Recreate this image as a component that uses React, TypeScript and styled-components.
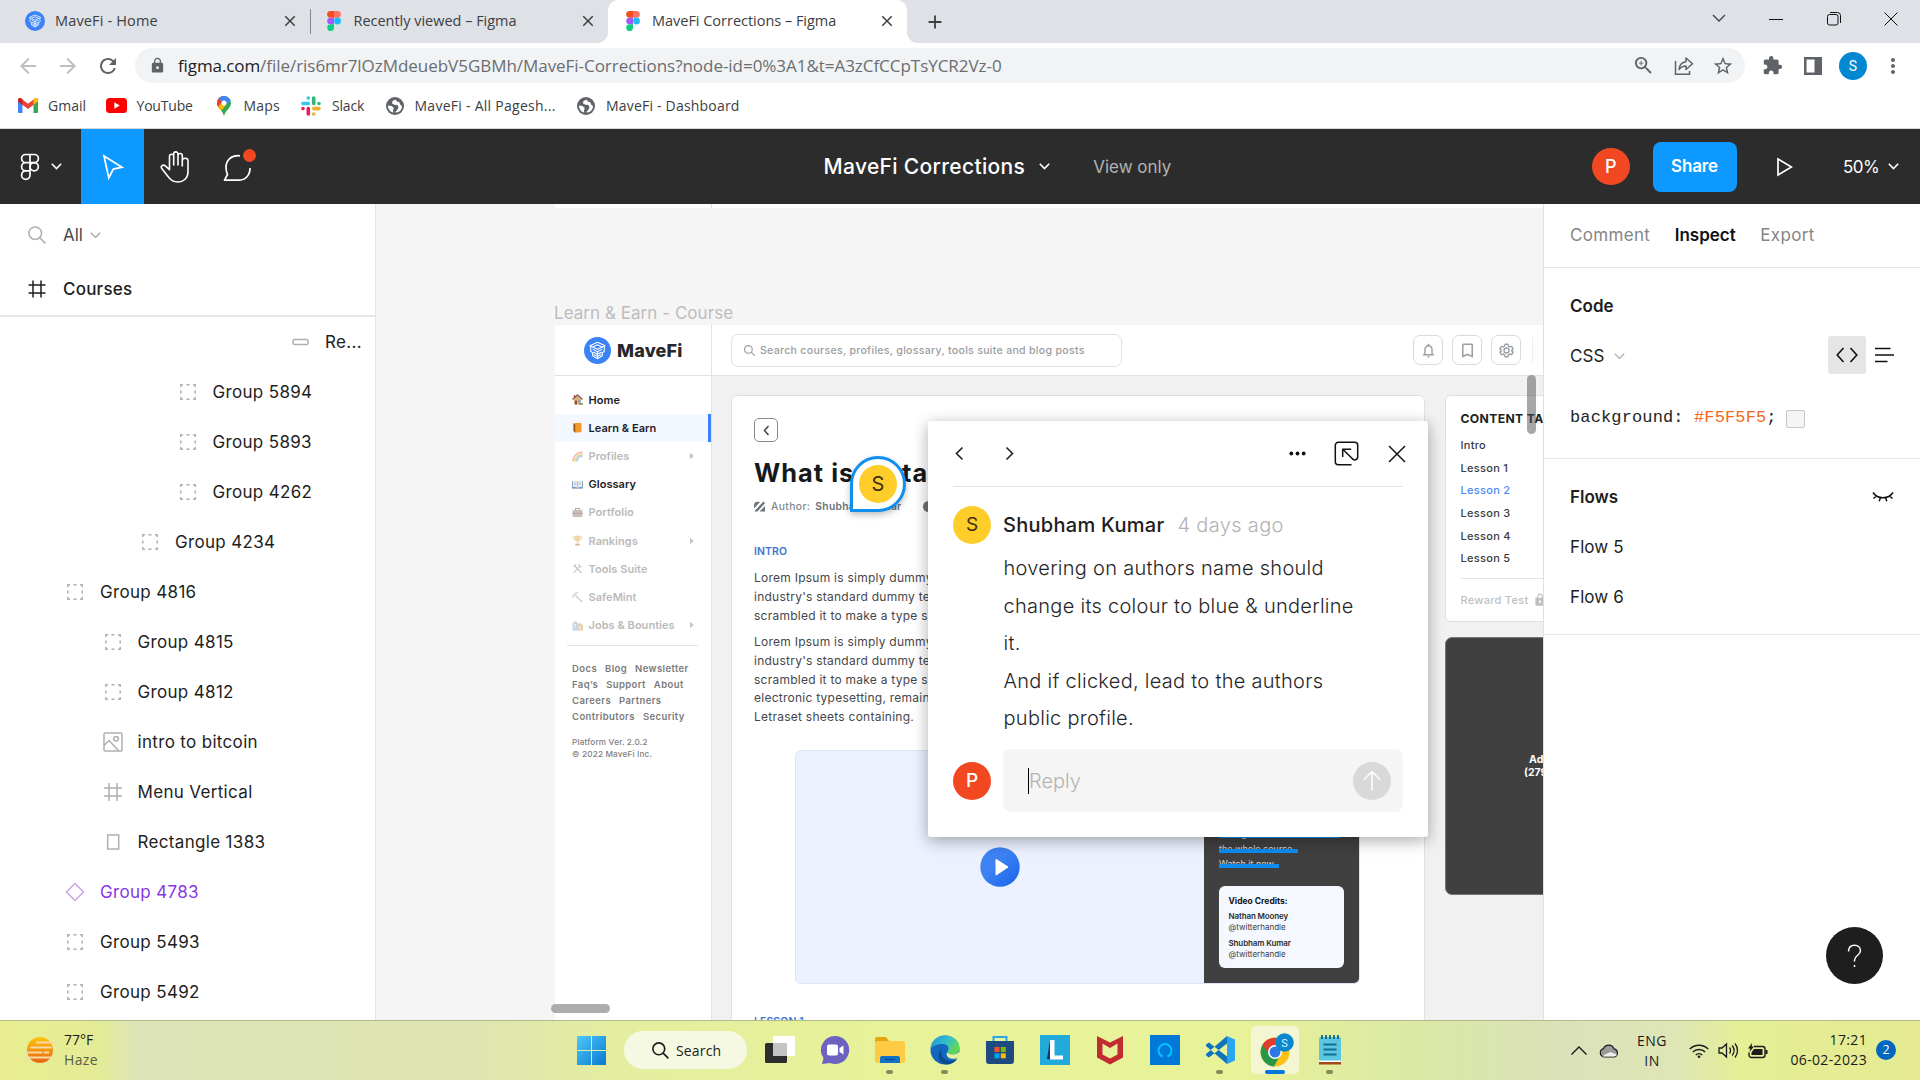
import React from "react";
import styled, { createGlobalStyle } from "styled-components";
import {
  MdArrowBack,
  MdArrowForward,
  MdRefresh,
  MdLock,
  MdStarBorder,
  MdExtension,
  MdMoreVert,
  MdZoomIn,
  MdClose,
  MdAdd,
  MdNotificationsNone,
  MdBookmarkBorder,
} from "react-icons/md";

const ui = `"Open Sans", "Noto Sans", sans-serif`;
const inter = `Inter, "Liberation Sans", sans-serif`;

const Global = createGlobalStyle`
  * { box-sizing: border-box; }
  html, body { margin: 0; padding: 0; overflow: hidden; background: #fff; }
  svg { display: block; flex: none; }
`;

const Screen = styled.div`
  width: 1920px;
  height: 1080px;
  display: flex;
  flex-direction: column;
  overflow: hidden;
  font-family: ${inter};
  color: #1e1e1e;
  white-space: nowrap;
`;

/* ---------- browser ---------- */

const TabStrip = styled.div`
  height: 43px;
  flex: none;
  display: flex;
  align-items: stretch;
  background: #dee1e6;
  font-family: ${ui};
  color: #3c4043;
`;

const Tab = styled.div<{ $w: number; $left: number; $active?: boolean }>`
  position: relative;
  width: ${(p) => p.$w}px;
  display: flex;
  align-items: center;
  padding: 0 11px 1px ${(p) => p.$left}px;
  background: ${(p) => (p.$active ? "#fff" : "transparent")};
  border-radius: 10px 10px 0 0;
  ${(p) =>
    p.$active &&
    `&::before, &::after {
      content: ""; position: absolute; bottom: 0; width: 10px; height: 10px;
    }
    &::before { left: -10px; background: radial-gradient(circle at 0 0, transparent 9.5px, #fff 10px); }
    &::after { right: -10px; background: radial-gradient(circle at 100% 0, transparent 9.5px, #fff 10px); }`}
`;

const TabTitle = styled.span<{ $gap: number; $ls?: number }>`
  flex: 1;
  margin-left: ${(p) => p.$gap}px;
  font-size: 14.5px;
  line-height: 20px;
  letter-spacing: ${(p) => p.$ls ?? -0.02}px;
`;

const TabDivider = styled.div`
  width: 1px;
  height: 25px;
  margin-top: 9px;
  background: #85888c;
`;

const NewTab = styled.div`
  display: flex;
  align-items: center;
  margin-left: 17px;
  flex: 1;
`;

const WindowButtons = styled.div`
  display: flex;
  align-items: center;
  gap: 43.3px;
  padding: 0 22px 6px 0;
`;

const AddressRow = styled.div`
  height: 45px;
  flex: none;
  display: flex;
  align-items: center;
  background: #fff;
  color: #5f6368;
`;

const NavButtons = styled.div`
  width: 135px;
  display: flex;
  align-items: center;
  gap: 16px;
  padding-left: 16px;
  svg:nth-child(-n + 2) {
    color: #bcbec1;
  }
`;

const AddressBar = styled.div`
  width: 1610px;
  height: 35px;
  display: flex;
  align-items: center;
  padding: 0 11px 0 14px;
  border-radius: 18px;
  background: #f1f3f4;
`;

const Url = styled.div`
  flex: 1;
  margin-left: 12px;
  font-family: ${ui};
  font-size: 17px;
  letter-spacing: -0.04px;
  color: #6a6e72;
  b {
    font-weight: 400;
    color: #202124;
    letter-spacing: -0.1px;
  }
`;

const AddressIcons = styled.div`
  display: flex;
  align-items: center;
  gap: 18.5px;
`;

const BrowserTools = styled.div`
  flex: 1;
  display: flex;
  align-items: center;
  padding-left: 17px;
`;

const PanelGlyph = styled.div`
  margin-left: 20.5px;
`;

const Profile = styled.div`
  width: 28px;
  height: 28px;
  margin: 0 13.5px 0 17.5px;
  border-radius: 50%;
  background: #0288d1;
  color: #fff;
  font: 400 14px/28px Roboto, sans-serif;
  text-align: center;
`;

const Bookmarks = styled.div`
  height: 41px;
  flex: none;
  display: flex;
  align-items: center;
  padding: 0 0 5px 18px;
  background: #fff;
  border-bottom: 1px solid #d5d6d8;
  font-family: ${ui};
  font-size: 14px;
  color: #3c4043;
`;

const Bookmark = styled.div<{ $w: number; $gap: number; $ls?: number }>`
  display: flex;
  align-items: center;
  width: ${(p) => p.$w}px;
  letter-spacing: ${(p) => p.$ls ?? 0}px;
  span {
    margin-left: ${(p) => p.$gap}px;
  }
`;

/* ---------- editor toolbar ---------- */

const Toolbar = styled.div`
  height: 75px;
  flex: none;
  display: flex;
  align-items: stretch;
  background: #2c2c2c;
  color: #fff;
`;

const Tool = styled.div<{ $w: number; $active?: boolean }>`
  width: ${(p) => p.$w}px;
  display: flex;
  align-items: center;
  justify-content: center;
  gap: 11px;
  background: ${(p) => (p.$active ? "#0d99ff" : "transparent")};
`;

const FileTitle = styled.div`
  flex: 1;
  display: flex;
  align-items: center;
  padding-left: 553.5px;
  font-size: 21px;
  font-weight: 450;
  letter-spacing: 0.33px;
  svg {
    margin-left: 14px;
  }
`;

const ViewOnly = styled.span`
  margin-left: 43px;
  font-size: 17px;
  font-weight: 400;
  letter-spacing: 0;
  color: #b3b3b3;
`;

const ToolbarRight = styled.div`
  width: 328px;
  display: flex;
  align-items: center;
  font-size: 17px;
`;

const Avatar = styled.div<{ $size: number; $color: string; $ink?: string; $font?: number }>`
  width: ${(p) => p.$size}px;
  height: ${(p) => p.$size}px;
  flex: none;
  display: flex;
  align-items: center;
  justify-content: center;
  border-radius: 50%;
  background: ${(p) => p.$color};
  color: ${(p) => p.$ink ?? "#fff"};
  font-size: ${(p) => p.$font ?? 18}px;
  font-weight: ${(p) => (p.$ink ? 400 : 500)};
`;

const ShareButton = styled.div`
  width: 84px;
  height: 50px;
  margin: 0 40px 0 23px;
  border-radius: 8px;
  background: #0d99ff;
  font-weight: 600;
  line-height: 49px;
  letter-spacing: -0.1px;
  text-align: center;
`;

const Zoom = styled.div`
  display: flex;
  align-items: center;
  gap: 9px;
  margin-left: 50.5px;
  letter-spacing: -0.55px;
`;

/* ---------- panels ---------- */

const Workspace = styled.div`
  height: 816px;
  flex: none;
  display: flex;
`;

const LeftPanel = styled.div`
  width: 376px;
  background: #fff;
  border-right: 1px solid #e6e6e6;
  font-size: 17px;
`;

const SearchRow = styled.div`
  height: 61px;
  display: flex;
  align-items: center;
  padding: 1px 0 0 28px;
  color: #b0b0b0;
  span {
    margin: 0 7px 0 17px;
    color: #4a4a4a;
  }
`;

const PageRow = styled.div`
  height: 52px;
  display: flex;
  align-items: center;
  gap: 17px;
  padding: 0 0 2px 28px;
  border-bottom: 2px solid #e6e6e6;
  font-weight: 500;
  letter-spacing: 0.22px;
`;

const Layer = styled.div<{ $indent: number; $purple?: boolean }>`
  height: 50px;
  display: flex;
  align-items: center;
  padding-left: ${(p) => p.$indent}px;
  letter-spacing: 0.33px;
  font-weight: 370;
  color: ${(p) => (p.$purple ? "#8638e5" : "#1e1e1e")};
  svg {
    margin-right: 14px;
    color: ${(p) => (p.$purple ? "#c3a8e6" : "#b0b0b0")};
  }
`;

const RightPanel = styled.div`
  width: 377px;
  position: relative;
  background: #fff;
  border-left: 1px solid #e0e0e0;
  font-size: 17px;
`;

const PanelTabs = styled.div`
  height: 64px;
  display: flex;
  align-items: center;
  gap: 24.5px;
  padding: 0 0 1px 26px;
  border-bottom: 1px solid #e6e6e6;
  color: #858585;
  letter-spacing: 0.33px;
  b {
    font-weight: 600;
    letter-spacing: 0;
    color: #111;
  }
`;

const Section = styled.div<{ $bottom: number }>`
  padding: 13px 26px ${(p) => p.$bottom}px 26px;
  border-bottom: 1px solid #e6e6e6;
`;

const SectionRow = styled.div<{ $bold?: boolean; $h?: number }>`
  height: ${(p) => p.$h ?? 50}px;
  display: flex;
  align-items: center;
  font-weight: ${(p) => (p.$bold ? 600 : 370)};
  letter-spacing: ${(p) => (p.$bold ? 0 : 0.1)}px;
`;

const Language = styled.span`
  margin-right: 9px;
`;

const Spacer = styled.div`
  flex: 1;
`;

const ViewToggle = styled.div`
  width: 38px;
  height: 38px;
  display: flex;
  align-items: center;
  justify-content: center;
  margin: 0 9px 2px 0;
  border-radius: 3px;
  background: #e5e5e5;
`;

const ListGlyph = styled.div`
  padding-bottom: 2px;
`;

const Code = styled.div`
  display: flex;
  align-items: center;
  font-family: "Liberation Mono", "DejaVu Sans Mono", monospace;
  font-size: 17px;
  font-weight: 400;
  letter-spacing: 0.13px;
  white-space: pre;
  em {
    font-style: normal;
    color: #f2681c;
  }
`;

const Swatch = styled.div`
  width: 19px;
  height: 18px;
  margin: 4px 0 0 9px;
  border: 1px solid #c8c8c8;
  border-radius: 2px;
  background: #f5f5f5;
`;

const HelpButton = styled.div`
  position: absolute;
  right: 37px;
  bottom: 36px;
  width: 57px;
  height: 57px;
  display: flex;
  align-items: center;
  justify-content: center;
  border-radius: 50%;
  background: #1e1e1e;
`;

/* ---------- canvas ---------- */

const Canvas = styled.div`
  position: relative;
  width: 1167px;
  overflow: hidden;
  background: #f5f5f5;
`;

const UpperFrame = styled.div`
  position: absolute;
  left: 179px;
  top: 0;
  width: 1000px;
  height: 4px;
  padding-left: 156px;
  background: #fff;
  div {
    width: 1px;
    height: 4px;
    background: #ddd;
  }
`;

const FrameLabel = styled.div`
  position: absolute;
  left: 178px;
  top: 99px;
  font-size: 17px;
  line-height: 21px;
  letter-spacing: 0.04px;
  color: #bdbdbd;
`;

const Frame = styled.div`
  position: absolute;
  left: 179px;
  top: 121px;
  width: 1100px;
  height: 800px;
  display: flex;
  background: #f1f1f1;
  color: #222;
`;

const SideBar = styled.div`
  width: 157px;
  flex: none;
  background: #fff;
  border-right: 1px solid #e2e2e2;
`;

const Brand = styled.div`
  height: 51px;
  display: flex;
  align-items: center;
  gap: 6px;
  padding-left: 29px;
  border-bottom: 1px solid #e2e2e2;
  font-size: 18px;
  font-weight: 800;
  letter-spacing: 0.2px;
  color: #26282b;
`;

const Menu = styled.div`
  padding: 9.6px 0 6px;
`;

const MenuItem = styled.div<{ $state?: "on" | "off" | "current" }>`
  height: 28.2px;
  display: flex;
  align-items: center;
  padding: 0 15px 0 17px;
  font-size: 11px;
  font-weight: 600;
  letter-spacing: 0.04px;
  color: ${(p) => (p.$state === "off" ? "#bababa" : "#1c1d1f")};
  background: ${(p) => (p.$state === "current" ? "#f3f7ff" : "transparent")};
  box-shadow: ${(p) => (p.$state === "current" ? "inset -3px 0 0 #3c82f6" : "none")};
  svg:first-child {
    margin-right: 5.5px;
    opacity: ${(p) => (p.$state === "off" ? 0.45 : 1)};
  }
  span {
    flex: 1;
  }
`;

const MenuRule = styled.div`
  width: 131px;
  height: 1px;
  margin: 0 0 13.9px 12px;
  background: #e2e2e2;
`;

const FooterLinks = styled.div`
  height: 16.2px;
  display: flex;
  align-items: center;
  gap: 8px;
  padding-left: 17px;
  font-size: 9.5px;
  font-weight: 600;
  letter-spacing: 0.4px;
  color: #7b7b7b;
`;

const Version = styled.div`
  margin-top: 11px;
  padding-left: 17px;
  font-size: 8.2px;
  font-weight: 500;
  line-height: 12.5px;
  letter-spacing: 0.17px;
  color: #808080;
`;

const FrameMain = styled.div`
  flex: 1;
  display: flex;
  flex-direction: column;
`;

const FrameHeader = styled.div`
  height: 51px;
  flex: none;
  display: flex;
  align-items: center;
  padding-left: 19px;
  background: #fff;
  border-bottom: 1px solid #e2e2e2;
`;

const FrameSearch = styled.div`
  width: 391px;
  height: 33px;
  margin-right: 291px;
  display: flex;
  align-items: center;
  gap: 5.500px;
  padding: 1px 0 0 11.500px;
  border: 1px solid #dfe1e3;
  border-radius: 7px;
  font-size: 10.6px;
  font-weight: 500;
  letter-spacing: 0.28px;
  color: #9a9da1;
`;

const IconBox = styled.div`
  width: 30px;
  height: 30px;
  display: flex;
  align-items: center;
  justify-content: center;
  margin-right: 9px;
  border: 1px solid #d8dadd;
  border-radius: 7px;
  color: #9ba0a6;
`;

const HeaderRule = styled.div`
  width: 1px;
  height: 27px;
  margin-left: 2px;
  background: #eee;
`;

const Columns = styled.div`
  flex: 1;
  display: flex;
  align-items: flex-start;
  gap: 20px;
  padding: 19px 0 0 18.5px;
`;

const Article = styled.div`
  width: 694.5px;
  height: 720px;
  flex: none;
  padding: 22px 22.5px;
  border: 1px solid #e0e0e0;
  border-radius: 6px;
  background: #fff;
`;

const BackButton = styled.div`
  width: 24px;
  height: 24px;
  display: flex;
  align-items: center;
  justify-content: center;
  border: 1px solid #8b8b8b;
  border-radius: 5px;
`;

const Heading = styled.div`
  margin-top: 16px;
  font-size: 25.3px;
  font-weight: 700;
  line-height: 30px;
  letter-spacing: 1.05px;
  color: #17181a;
`;

const Meta = styled.div`
  height: 14px;
  margin: 11px 0 31.5px;
  display: flex;
  align-items: center;
  font-size: 10.3px;
  font-weight: 500;
  letter-spacing: 0.4px;
  color: #84888d;
  b {
    width: 107.500px;
    margin-left: 5px;
    font-weight: 600;
    letter-spacing: 0.3px;
    color: #6d7278;
  }
  svg:first-child {
    margin-right: 6px;
  }
`;

const Kicker = styled.div`
  font-size: 10.4px;
  font-weight: 600;
  line-height: 14px;
  letter-spacing: 0.15px;
  color: #3c74cf;
`;

const Paragraph = styled.div<{ $top: number }>`
  margin-top: ${(p) => p.$top}px;
  font-size: 12px;
  line-height: 18.7px;
  letter-spacing: 0.25px;
  color: #45474a;
`;

const Video = styled.div`
  width: 564.5px;
  height: 234px;
  margin: 22.8px 0 31px 41px;
  display: flex;
  overflow: hidden;
  border: 1px solid #dde4f3;
  border-radius: 6px;
  background: #ebf1fe;
`;

const Player = styled.div`
  flex: 1;
  display: flex;
  align-items: center;
  justify-content: center;
`;

const VideoAside = styled.div`
  width: 156px;
  margin: -1px -1px -1px 0;
  display: flex;
  flex-direction: column;
  align-items: flex-start;
  justify-content: flex-end;
  padding: 0 15.5px 15.5px;
  background: #404040;
`;

const Highlight = styled.span<{ $w: number }>`
  position: relative;
  width: ${(p) => p.$w}px;
  font-size: 9px;
  line-height: 15px;
  color: #d8d8d8;
  &::after {
    content: "";
    position: absolute;
    left: 0;
    right: 0;
    top: 8.8px;
    height: 3.7px;
    background: #0d8cf0;
  }
`;

const Credits = styled.div`
  width: 125px;
  height: 82px;
  margin-top: 15.5px;
  padding: 9px 9.5px;
  border-radius: 6px;
  background: #f5f8ff;
  font-size: 8px;
  line-height: 11px;
  color: #3a3c40;
  h4 {
    margin: 0 0 3px;
    font-size: 8.5px;
    line-height: 13px;
    color: #101113;
  }
  b {
    display: block;
    font-weight: 600;
    letter-spacing: -0.12px;
    color: #2b2d30;
  }
  p {
    margin: 0 0 4.5px;
  }
`;

const Aside = styled.div`
  width: 217px;
  flex: none;
`;

const ContentTable = styled.div`
  height: 226.5px;
  padding: 15.5px 14.5px;
  border: 1px solid #e0e0e0;
  border-radius: 6px;
  background: #fff;
  font-size: 11px;
  font-weight: 500;
  letter-spacing: 0.3px;
  h3 {
    margin: 0 0 8.7px;
    font-size: 12.2px;
    font-weight: 700;
    line-height: 14px;
    letter-spacing: 0.35px;
  }
`;

const LessonLink = styled.div<{ $current?: boolean }>`
  line-height: 22.6px;
  color: ${(p) => (p.$current ? "#4a8bf5" : "#3a3c3f")};
`;

const Reward = styled.div`
  display: flex;
  align-items: center;
  gap: 5px;
  margin-top: 8px;
  padding-top: 13px;
  border-top: 1px solid #e4e4e4;
  line-height: 16px;
  letter-spacing: 0.28px;
  color: #bfbfbf;
`;

const AdBox = styled.div`
  height: 258px;
  margin-top: 15px;
  display: flex;
  flex-direction: column;
  align-items: center;
  justify-content: center;
  border: 1px solid #777;
  border-radius: 7px;
  background: #404040;
  color: #fff;
  font-size: 10.5px;
  font-weight: 700;
  line-height: 13px;
`;

const HScroll = styled.div`
  position: absolute;
  left: 175px;
  bottom: 7px;
  width: 59px;
  height: 9px;
  border-radius: 5px;
  background: rgba(150, 150, 150, 0.78);
`;

const VScroll = styled.div`
  position: absolute;
  left: 1151px;
  top: 171px;
  width: 9px;
  height: 59px;
  border-radius: 5px;
  background: rgba(80, 80, 80, 0.5);
`;

const Pin = styled.div`
  position: absolute;
  left: 474px;
  top: 252px;
  width: 56px;
  height: 56px;
  display: flex;
  align-items: center;
  justify-content: center;
  border: 3px solid #1090ee;
  border-radius: 50% 50% 50% 0;
  background: #fff;
  box-shadow: 0 3px 6px rgba(0, 0, 0, 0.25);
`;

const Popover = styled.div`
  position: absolute;
  left: 552px;
  top: 217px;
  width: 500px;
  height: 416px;
  padding: 0 25px;
  border-radius: 3px;
  background: #fff;
  box-shadow: 0 5px 17px rgba(0, 0, 0, 0.2), 0 2px 14px rgba(0, 0, 0, 0.15);
  font-size: 20px;
`;

const PopHeader = styled.div`
  height: 66px;
  display: flex;
  align-items: center;
  padding-right: 0;
  margin-bottom: 18.5px;
  border-bottom: 1px solid #e3e3e3;
`;

const PopIcon = styled.div<{ $ml?: number; $mr?: number }>`
  margin-left: ${(p) => p.$ml ?? 0}px;
  margin-right: ${(p) => p.$mr ?? 0}px;
`;

const Author = styled.div`
  display: flex;
  align-items: center;
  height: 38px;
  b {
    margin-left: 12px;
    font-weight: 500;
    letter-spacing: 0.28px;
  }
  time {
    margin-left: 13px;
    font-weight: 300;
    letter-spacing: 0.35px;
    color: #b3b3b3;
  }
`;

const Message = styled.div`
  margin: 6.5px 0 11.5px 50.5px;
  font-weight: 350;
  line-height: 37.5px;
  letter-spacing: 0.28px;
  color: #262626;
`;

const ReplyRow = styled.div`
  display: flex;
  align-items: center;
  gap: 12px;
`;

const ReplyBox = styled.div`
  width: 400px;
  height: 63px;
  display: flex;
  align-items: center;
  justify-content: space-between;
  padding: 0 12px 0 25px;
  border-radius: 8px;
  background: #f5f5f5;
  color: #b3b3b3;
  font-weight: 350;
`;

const Caret = styled.span`
  padding: 1px 0;
  border-left: 1px solid #000;
`;

/* ---------- taskbar ---------- */

const Taskbar = styled.div`
  height: 60px;
  flex: none;
  display: flex;
  align-items: stretch;
  border-top: 1px solid #b4b98c;
  background: linear-gradient(
    90deg,
    #e9ee90 0,
    #e3ec96 100px,
    #dce4b8 135px,
    #dfe5b0 480px,
    #e4ee9f 620px,
    #e8f298 900px,
    #e8f298 1240px,
    #d9e8a6 1430px,
    #dce1bb 1570px,
    #dfe6b4 1680px,
    #e4ef96 1740px,
    #e5ea92 1920px
  );
  font-family: ${ui};
  font-size: 14px;
  color: #1b1b1b;
`;

const Weather = styled.div`
  width: 577px;
  display: flex;
  align-items: center;
  gap: 9px;
  padding: 0 0 2px 25px;
  line-height: 20px;
  p {
    margin: 0;
    color: #5b5e43;
    letter-spacing: 0.35px;
  }
`;

const SearchPill = styled.div`
  width: 123px;
  height: 38px;
  margin: 10px 18.5px 0 18px;
  display: flex;
  align-items: center;
  gap: 7px;
  padding-left: 28px;
  border-radius: 19px;
  background: #f6f9e1;
  letter-spacing: 0.15px;
`;

const Start = styled.div`
  padding-top: 15px;
`;

const TaskApps = styled.div`
  width: 808.5px;
  display: flex;
  gap: 7px;
  margin-left: -10px;
`;

const TaskApp = styled.div<{ $open?: boolean; $active?: boolean }>`
  width: 48px;
  height: 48px;
  margin-top: 5px;
  display: flex;
  flex-direction: column;
  align-items: center;
  justify-content: space-between;
  padding-top: ${(p) => (p.$active ? 7 : 9)}px;
  border-radius: 5px;
  background: ${(p) => (p.$active ? "#f2f6d2" : "transparent")};
  &::after {
    content: "";
    width: ${(p) => (p.$active ? 20 : 7)}px;
    height: 4px;
    border-radius: 2px;
    background: ${(p) => (p.$active ? "#0078d7" : p.$open ? "#868a58" : "transparent")};
  }
`;

const Tray = styled.div`
  flex: 1;
  display: flex;
  align-items: center;
`;

const TrayText = styled.div<{ $w: number; $align?: string; $ls?: number; $up?: number }>`
  width: ${(p) => p.$w}px;
  padding-bottom: ${(p) => p.$up ?? 0}px;
  text-align: ${(p) => p.$align ?? "center"};
  line-height: 20px;
  letter-spacing: ${(p) => p.$ls ?? 0.35}px;
`;

const TrayIcon = styled.div<{ $w: number }>`
  width: ${(p) => p.$w}px;
  display: flex;
  justify-content: center;
`;

const Badge = styled.div`
  width: 20px;
  height: 20px;
  margin: 0 0 1px 9px;
  border-radius: 50%;
  background: #0067c0;
  color: #fff;
  font-size: 12.5px;
  line-height: 19px;
  text-align: center;
`;

/* ---------- icons ---------- */

const Chevron = ({ w = 11, c = "currentColor", s = 1.6 }: { w?: number; c?: string; s?: number }) => (
  <svg width={w} height={w * 0.6} viewBox="0 0 11 6.6" fill="none" stroke={c} strokeWidth={s}>
    <path d="M.8.8 5.5 5.5 10.2.8" />
  </svg>
);

const FigmaMark = () => (
  <svg width="14" height="20" viewBox="0 0 14 20">
    <path d="M3.5 0H7v6.7H3.5a3.35 3.35 0 0 1 0-6.7z" fill="#f24e1e" />
    <path d="M7 0h3.5a3.35 3.35 0 0 1 0 6.7H7z" fill="#ff7262" />
    <path d="M3.5 6.7H7v6.6H3.5a3.3 3.3 0 0 1 0-6.6z" fill="#a259ff" />
    <circle cx="10.5" cy="10" r="3.4" fill="#1abcfe" />
    <path d="M3.5 13.3H7v3.3a3.4 3.4 0 1 1-3.5-3.3z" fill="#0acf83" />
  </svg>
);

const MaveLogo = ({ size }: { size: number }) => (
  <svg width={size} height={size} viewBox="0 0 28 28" fill="none">
    <circle cx="14" cy="14" r="14" fill="#3b82f6" />
    <g stroke="#fff" strokeWidth="1.1" strokeLinejoin="round">
      <path d="M14 5.5 22 9l-8 3.8L6 9z" />
      <path d="M14 8 19 10.5M14 8 9 10.5M7 10v5l2 1.2v3.3l5 3 5-3v-3.3l2-1.2v-5" />
      <path d="m9 12.6 5 2.6 5-2.6M9.5 15.5l4.5 2.4 4.5-2.4M10 18l4 2.2 4-2.2M14 15.2v7" />
    </g>
  </svg>
);

const Gmail = () => (
  <svg width="20" height="15" viewBox="0 0 20 15">
    <path d="M0 2v12a1 1 0 0 0 1 1h3.5V5.5z" fill="#4285f4" />
    <path d="M20 2v12a1 1 0 0 1-1 1h-3.5V5.5z" fill="#34a853" />
    <path d="M0 2C0 .2 1.8-.5 3.2.5L10 5.7 16.8.5C18.2-.5 20 .2 20 2v1.5L10 11 0 3.5z" fill="#ea4335" />
    <path d="M0 2C0 .2 1.8-.5 3.2.5L4.5 1.5V6.8L0 3.5z" fill="#c5221f" />
    <path d="M20 2c0-1.8-1.8-2.5-3.2-1.5l-1.3 1V6.8L20 3.5z" fill="#fbbc04" />
  </svg>
);

const YouTube = () => (
  <svg width="21" height="15" viewBox="0 0 21 15">
    <rect width="21" height="15" rx="3.5" fill="#f00" />
    <path d="m8.3 4.3 5.5 3.2-5.5 3.2z" fill="#fff" />
  </svg>
);

const Maps = () => (
  <svg width="14" height="20" viewBox="0 0 14 20">
    <path d="M7 0a7 7 0 0 1 7 7c0 5-5.5 7-7 13C5.5 14 0 12 0 7a7 7 0 0 1 7-7z" fill="#34a853" />
    <path d="M0 7a7 7 0 0 0 1.5 4.500L9.500 2 5 .3A7 7 0 0 0 0 7z" fill="#ea4335" />
    <path d="M2 2.200A7 7 0 0 1 10 .7L5 6.500z" fill="#4285f4" />
    <path d="M10 .7A7 7 0 0 1 13.700 5L8.600 9 6 4.800z" fill="#4285f4" />
    <path d="m1.200 11 4-5 3.500 3.500-4.500 5.200C3 13.400 2 12.400 1.200 11z" fill="#fbbc04" />
    <circle cx="7" cy="7" r="2.5" fill="#fff" />
  </svg>
);

const Slack = () => (
  <svg width="20" height="20" viewBox="0 0 20 20" strokeWidth="3.6" strokeLinecap="round">
    <path d="M7.300 2h0M2 7.500h5.300" stroke="#36c5f0" />
    <path d="M12.700 2v5.500M18 7.500h0" stroke="#2eb67d" />
    <path d="M12.700 12.600H18M12.700 18h0" stroke="#ecb22e" />
    <path d="M7.300 12.600V18M2 12.600h0" stroke="#e01e5a" />
  </svg>
);

const Globe = () => (
  <svg width="18" height="18" viewBox="0 0 18 18">
    <circle cx="9" cy="9" r="9" fill="#5f6368" />
    <path d="M9.500 2.500 6.500 4 6 6.500l2.500 1.300 3 .2 1 2.500-1.300 2.500-2 2.300C13 16 16 13 16 9l-1.500-1-1.500-3.200-1.500.2z" fill="#fff" />
    <path d="M2 8.500l3.500.5 2.300 2-.8 2.300.3 2.300C4.500 15 2 12.500 2 8.500z" fill="#fff" />
  </svg>
);

const ShareArrow = () => (
  <svg width="20" height="20" viewBox="0 0 20 20" fill="none" stroke="#5f6368" strokeWidth="1.5">
    <path d="M1.500 5v13.200H15.500V15" />
    <path d="M5 13.500c.5-5 3.500-7.500 7-7.800V2l6.500 5.700-6.500 5.800v-3.600c-3 0-5.200 1-7 3.600z" strokeLinejoin="round" />
  </svg>
);

const FrameHash = ({ size = 18 }: { size?: number }) => (
  <svg width={size} height={size} viewBox="0 0 18 18" fill="none" stroke="currentColor" strokeWidth="1.5">
    <path d="M5 .5v17M13 .5v17M.5 5h17M.5 13h17" />
  </svg>
);

const LayerIcon = ({ kind }: { kind: string }) => (
  <svg width="22" height="22" viewBox="0 0 22 22" fill="none" stroke="currentColor" strokeWidth="1.5">
    {kind === "group" && (
      <path d="M3.800 6V3.800H6M9.500 3.800h3M16 3.800h2.200V6M18.200 9.500v3M18.200 16v2.200H16M12.500 18.200h-3M6 18.200H3.800V16M3.800 12.500v-3" />
    )}
    {kind === "image" && (
      <>
        <rect x="2" y="2" width="18" height="18" rx="1" />
        <circle cx="14" cy="7.8" r="2.3" />
        <path d="m2 14.500 5-5L17 20" />
      </>
    )}
    {kind === "frame" && <path d="M7 2v18M15 2v18M2 7h18M2 15h18" />}
    {kind === "rect" && <rect x="5.7" y="4" width="11" height="14" />}
    {kind === "pill" && <rect x="4" y="8.5" width="15" height="5" rx="1.5" />}
    {kind === "diamond" && <path d="m11 2.500 8.500 8.500-8.500 8.500L2.500 11z" />}
  </svg>
);

const MenuIcon = ({ kind }: { kind: string }) => (
  <svg width="11" height="11" viewBox="0 0 11 11" fill="none">
    {kind === "home" && (
      <>
        <path d="M2 5v5.500h7V5L5.500 2z" fill="#d9b48a" />
        <path d="M.5 5.500 5.500 1l5 4.500" stroke="#8d5f4a" strokeWidth="1.4" />
        <path d="M2.500 1.200v2.500" stroke="#a33c31" strokeWidth="1.4" />
        <rect x="3" y="6.5" width="2" height="4" fill="#9a4a2f" />
        <rect x="6.3" y="6.3" width="2" height="2" fill="#5aa7d8" />
        <path d="M7 10h4" stroke="#5a9a4a" strokeWidth="1.5" />
      </>
    )}
    {kind === "learn" && (
      <>
        <path d="m1.500 1.300 7-.6 1 1.300v8l-6 .7-2-1.700z" fill="#f39a2c" />
        <path d="m1.500 1.300 1.800 1.500v7.900l-1.800-1.700z" fill="#a4571b" />
      </>
    )}
    {kind === "rainbow" && (
      <>
        <path d="M1 10.500C1 5 5 1 10.500 1" stroke="#f05545" strokeWidth="1.4" />
        <path d="M2.400 10.500c0-4.500 3.600-8.100 8.100-8.100" stroke="#fbc02d" strokeWidth="1.4" />
        <path d="M3.800 10.500c0-3.700 3-6.700 6.700-6.700" stroke="#58b368" strokeWidth="1.4" />
        <path d="M5.200 10.500c0-3 2.300-5.300 5.300-5.300" stroke="#7a7df0" strokeWidth="1.4" />
      </>
    )}
    {kind === "book" && (
      <>
        <path d="M.3 2.300h10.400V9.500H.3z" fill="#4a78a8" />
        <path d="M1 1.700c1.800-.5 3.300-.3 4.500.6 1.200-.9 2.700-1.100 4.500-.6v6.800c-1.800-.4-3.300-.2-4.500.5-1.200-.7-2.700-.9-4.500-.5z" fill="#e9eef2" />
        <path d="M5.500 2.300V9M2 3.800h2.500M2 5.300h2.500M6.500 3.800H9M6.500 5.300H9" stroke="#9aaab8" strokeWidth=".6" />
      </>
    )}
    {kind === "case" && (
      <>
        <rect x=".5" y="3" width="10" height="7" rx="1" fill="#8d6e63" />
        <path d="M3.500 3V1.500h4V3" stroke="#5d4037" strokeWidth="1.1" />
        <path d="M.5 6.300h10" stroke="#5d4037" />
      </>
    )}
    {kind === "cup" && (
      <>
        <path d="M2.800.8h5.400v3.500a2.700 2.700 0 0 1-5.400 0zM5 6.800h1v2H5z" fill="#e8a33a" />
        <path d="M2.800 1.800H1c0 2 .8 2.800 2 3M8.200 1.800H10c0 2-.8 2.800-2 3" stroke="#e8a33a" />
        <rect x="3.3" y="8.7" width="4.4" height="1.8" fill="#a8672a" />
      </>
    )}
    {kind === "tools" && (
      <path d="m1.500 10 6-6.500M9.500 10 3 3.200M1.500 3.800 4 1.500M7 1.200c-.3 1.700.6 2.800 2.700 2.500" stroke="#777" strokeWidth="1.1" />
    )}
    {kind === "pick" && (
      <path d="m3.200 3.200 7 7M.8 5.500C1.200 3.200 3.200 1.200 5.800.8" stroke="#777" strokeWidth="1.1" />
    )}
    {kind === "jobs" && (
      <>
        <path d="M.5 10.500V3l3-2 2.500 2v7.500z" fill="#7aa9d8" />
        <path d="M5 10.500V4.500L8 3l3 2v5.500z" fill="#c99b4a" />
        <path d="M2 4.500h2M2 6.500h2M7 6.500h2M7 8.500h2" stroke="#fff" strokeWidth=".8" />
      </>
    )}
  </svg>
);

const SearchGlyph = ({ size, s = 1.5 }: { size: number; s?: number }) => (
  <svg width={size} height={size} viewBox="0 0 18 18" fill="none" stroke="currentColor" strokeWidth={s}>
    <circle cx="7.2" cy="7.2" r="6.3" />
    <path d="m11.800 11.800 5.600 5.600" />
  </svg>
);

/* ---------- data ---------- */

const layers: [string, string, number][] = [
  ["pill", "Re...", 289],
  ["group", "Group 5894", 176.5],
  ["group", "Group 5893", 176.5],
  ["group", "Group 4262", 176.5],
  ["group", "Group 4234", 139],
  ["group", "Group 4816", 64],
  ["group", "Group 4815", 101.5],
  ["group", "Group 4812", 101.5],
  ["image", "intro to bitcoin", 101.5],
  ["frame", "Menu Vertical", 101.5],
  ["rect", "Rectangle 1383", 101.5],
  ["diamond", "Group 4783", 64],
  ["group", "Group 5493", 64],
  ["group", "Group 5492", 64],
];

const menu: [string, string, "on" | "off" | "current", boolean?][] = [
  ["home", "Home", "on"],
  ["learn", "Learn & Earn", "current"],
  ["rainbow", "Profiles", "off", true],
  ["book", "Glossary", "on"],
  ["case", "Portfolio", "off"],
  ["cup", "Rankings", "off", true],
  ["tools", "Tools Suite", "off"],
  ["pick", "SafeMint", "off"],
  ["jobs", "Jobs & Bounties", "off", true],
];

const footer = [
  ["Docs", "Blog", "Newsletter"],
  ["Faq’s", "Support", "About"],
  ["Careers", "Partners"],
  ["Contributors", "Security"],
];

const lessons = ["Intro", "Lesson 1", "Lesson 2", "Lesson 3", "Lesson 4", "Lesson 5"];

/* ---------- regions ---------- */

const Browser = () => (
  <>
    <TabStrip>
      <Tab $w={310} $left={25}>
        <MaveLogo size={20} />
        <TabTitle $gap={10} $ls={0.15}>
          MaveFi - Home
        </TabTitle>
        <MdClose size={18} />
      </Tab>
      <TabDivider />
      <Tab $w={297} $left={16}>
        <FigmaMark />
        <TabTitle $gap={12.5}>Recently viewed – Figma</TabTitle>
        <MdClose size={18} />
      </Tab>
      <Tab $w={299} $left={18} $active>
        <FigmaMark />
        <TabTitle $gap={12}>MaveFi Corrections – Figma</TabTitle>
        <MdClose size={18} />
      </Tab>
      <NewTab>
        <MdAdd size={22} />
      </NewTab>
      <WindowButtons>
        <Chevron w={14} s={1} />
        <svg width="14" height="14" stroke="#111">
          <path d="M0 7.500h14" />
        </svg>
        <svg width="14" height="14" fill="none" stroke="#111" viewBox="0 0 14 14">
          <rect x=".5" y="2.5" width="10.5" height="10.5" rx="2" />
          <path d="M3 .5h7.500a3 3 0 0 1 3 3V11" />
        </svg>
        <svg width="14" height="14" stroke="#111">
          <path d="m.5.5 13 13M13.500.5l-13 13" />
        </svg>
      </WindowButtons>
    </TabStrip>
    <AddressRow>
      <NavButtons>
        <MdArrowBack size={24} />
        <MdArrowForward size={24} />
        <MdRefresh size={24} />
      </NavButtons>
      <AddressBar>
        <MdLock size={17} />
        <Url>
          <b>figma.com</b>/file/ris6mr7lOzMdeuebV5GBMh/MaveFi-Corrections?node-id=0%3A1&amp;t=A3zCfCCpTsYCR2Vz-0
        </Url>
        <AddressIcons>
          <MdZoomIn size={23} />
          <ShareArrow />
          <MdStarBorder size={22} />
        </AddressIcons>
      </AddressBar>
      <BrowserTools>
        <MdExtension size={21} />
        <PanelGlyph>
          <svg width="18" height="18" viewBox="0 0 18 18">
            <path d="M0 0h18v18H0zM2.500 2.500v13h8v-13z" fill="#5f6368" fillRule="evenodd" />
          </svg>
        </PanelGlyph>
        <Profile>S</Profile>
        <MdMoreVert size={24} />
      </BrowserTools>
    </AddressRow>
    <Bookmarks>
      <Bookmark $w={87.5} $gap={10}>
        <Gmail />
        <span>Gmail</span>
      </Bookmark>
      <Bookmark $w={111} $gap={10} $ls={-0.2}>
        <YouTube />
        <span>YouTube</span>
      </Bookmark>
      <Bookmark $w={84.5} $gap={13} $ls={0.18}>
        <Maps />
        <span>Maps</span>
      </Bookmark>
      <Bookmark $w={85} $gap={11} $ls={-0.17}>
        <Slack />
        <span>Slack</span>
      </Bookmark>
      <Bookmark $w={191} $gap={10.5} $ls={0.27}>
        <Globe />
        <span>MaveFi - All Pagesh...</span>
      </Bookmark>
      <Bookmark $w={191} $gap={11} $ls={0.2}>
        <Globe />
        <span>MaveFi - Dashboard</span>
      </Bookmark>
    </Bookmarks>
  </>
);

const EditorToolbar = () => (
  <Toolbar>
    <Tool $w={81}>
      <svg width="20" height="28" viewBox="0 0 20 28" fill="none" stroke="#fff" strokeWidth="1.7">
        <path d="M10 1.500H5.700a4.100 4.100 0 0 0 0 8.200H10zM10 1.500h4.300a4.100 4.100 0 0 1 0 8.200H10zM10 9.700H5.700a4.100 4.100 0 0 0 0 8.200H10zM10 17.900H5.700a4.200 4.200 0 1 0 4.300 4.200z" />
        <circle cx="14.2" cy="13.8" r="4.1" />
      </svg>
      <Chevron w={11} />
    </Tool>
    <Tool $w={63} $active>
      <svg width="22" height="26" viewBox="0 0 22 26" fill="none" stroke="#fff" strokeWidth="1.7">
        <path d="M2 2 20 13.200l-8.700 1.900L6.800 24z" />
      </svg>
    </Tool>
    <Tool $w={61}>
      <svg width="30" height="32" viewBox="0 0 30 32" fill="none" stroke="#fff" strokeWidth="1.6" strokeLinejoin="round" strokeLinecap="round">
        <path d="M9.500 15V5.300a2.100 2.100 0 0 1 4.200 0V14M13.700 14V3a2.100 2.100 0 0 1 4.300 0v11M18 14V4.600a2.100 2.100 0 0 1 4.300 0V15M22.300 9.500c0-3 5.700-3.300 5.700.3V21c0 6-4.500 10-10 10-4.500 0-7.500-1.700-10-5.600L1.600 17.200c-1.200-2 1.500-4 3.400-2.500l4.500 4V14" />
      </svg>
    </Tool>
    <Tool $w={65}>
      <svg width="36" height="36" viewBox="0 0 36 36" fill="none">
        <path d="M20 6.800C11 6 6 11.500 6 18.500c0 3 .6 5.200 1.500 7L4.500 31.200H18.500C25.500 31.200 30.200 26 30 19" stroke="#fff" strokeWidth="1.7" strokeLinejoin="round" />
        <circle cx="29.5" cy="6.5" r="6.4" fill="#f24822" />
      </svg>
    </Tool>
    <FileTitle>
      MaveFi Corrections
      <Chevron w={11} />
      <ViewOnly>View only</ViewOnly>
    </FileTitle>
    <ToolbarRight>
      <Avatar $size={37.5} $color="#f24822">
        P
      </Avatar>
      <ShareButton>Share</ShareButton>
      <svg width="16" height="20" viewBox="0 0 16 20" fill="none" stroke="#fff" strokeWidth="1.7">
        <path d="M1 2v16l13.500-8z" />
      </svg>
      <Zoom>
        50%
        <Chevron w={11} />
      </Zoom>
    </ToolbarRight>
  </Toolbar>
);

const Mock = () => (
  <Frame>
    <SideBar>
      <Brand>
        <MaveLogo size={27} />
        MaveFi
      </Brand>
      <Menu>
        {menu.map(([icon, label, state, more]) => (
          <MenuItem key={label} $state={state}>
            <MenuIcon kind={icon} />
            <span>{label}</span>
            {more && (
              <svg width="9" height="8" viewBox="0 0 9 8" fill="#c4c4c4">
                <path d="M3 .8 6.800 4 3 7.200z" />
              </svg>
            )}
          </MenuItem>
        ))}
      </Menu>
      <MenuRule />
      {footer.map((row) => (
        <FooterLinks key={row[0]}>
          {row.map((t) => (
            <span key={t}>{t}</span>
          ))}
        </FooterLinks>
      ))}
      <Version>
        Platform Ver. 2.0.2
        <br />© 2022 MaveFi Inc.
      </Version>
    </SideBar>
    <FrameMain>
      <FrameHeader>
        <FrameSearch>
          <SearchGlyph size={11} s={1.9} />
          Search courses, profiles, glossary, tools suite and blog posts
        </FrameSearch>
        <IconBox>
          <MdNotificationsNone size={17} />
        </IconBox>
        <IconBox>
          <MdBookmarkBorder size={19} />
        </IconBox>
        <IconBox>
          <svg width="15" height="15" viewBox="0 0 24 24" fill="none" stroke="currentColor" strokeWidth="2.2">
            <path d="M9.700 2h4.600l.7 3 2.300 1.300 3-.9 2.300 4-2.300 2.100v1l2.300 2.100-2.300 4-3-.9L15 19l-.7 3H9.700L9 19l-2.300-1.300-3 .9-2.300-4 2.300-2.100v-1L1.400 9.400l2.300-4 3 .9L9 5z" strokeLinejoin="round" />
            <circle cx="12" cy="12" r="4" />
          </svg>
        </IconBox>
        <HeaderRule />
      </FrameHeader>
      <Columns>
        <Article>
          <BackButton>
            <svg width="7" height="11" viewBox="0 0 7 11" fill="none" stroke="#444" strokeWidth="1.5">
              <path d="M5.500 1 1.500 5.500l4 4.500" />
            </svg>
          </BackButton>
          <Heading>What is Metaverse?</Heading>
          <Meta>
            <svg width="11" height="11" viewBox="0 0 11 11" fill="#6d7278">
              <path d="M0 4.500C0 1 3 .3 6 1L0 7.500zM1 9.500 9.500.5 11 2 3.500 10.500H.5zM5.500 10.500 11 5v5.500z" />
            </svg>
            Author:<b>Shubham Kumar</b>
            <svg width="11" height="11">
              <circle cx="5.5" cy="5.5" r="5.5" fill="#6d7278" />
            </svg>
          </Meta>
          <Kicker>INTRO</Kicker>
          <Paragraph $top={10.6}>
            Lorem Ipsum is simply dummy text of the printing
            <br />
            industry's standard dummy text ever since
            <br />
            scrambled it to make a type specimen book.
          </Paragraph>
          <Paragraph $top={8}>
            Lorem Ipsum is simply dummy text of the printing
            <br />
            industry's standard dummy text ever since
            <br />
            scrambled it to make a type specimen book.
            <br />
            electronic typesetting, remaining essentially
            <br />
            Letraset sheets containing.
          </Paragraph>
          <Video>
            <Player>
              <svg width="40" height="40" viewBox="0 0 40 40">
                <defs>
                  <linearGradient id="play" x1="0" y1="0" x2="1" y2="1">
                    <stop offset=".4" stopColor="#3e82f4" />
                    <stop offset="1" stopColor="#1463ea" />
                  </linearGradient>
                </defs>
                <circle cx="20" cy="20" r="19.7" fill="url(#play)" />
                <path d="M16 12.300v15.800L28 20z" fill="#fff" stroke="#fff" strokeLinejoin="round" />
              </svg>
            </Player>
            <VideoAside>
              <Highlight $w={121}>through a brief intro of</Highlight>
              <Highlight $w={79}>the whole course.</Highlight>
              <Highlight $w={60}>Watch it now.</Highlight>
              <Credits>
                <h4>Video Credits:</h4>
                <b>Nathan Mooney</b>
                <p>@twitterhandle</p>
                <b>Shubham Kumar</b>
                <p>@twitterhandle</p>
              </Credits>
            </VideoAside>
          </Video>
          <Kicker>LESSON 1</Kicker>
        </Article>
        <Aside>
          <ContentTable>
            <h3>CONTENT TABLE</h3>
            {lessons.map((l) => (
              <LessonLink key={l} $current={l === "Lesson 2"}>
                {l}
              </LessonLink>
            ))}
            <Reward>
              Reward Test
              <MdLock size={14} />
            </Reward>
          </ContentTable>
          <AdBox>
            <span>Ad Space</span>
            <span>(279 x 257)</span>
          </AdBox>
        </Aside>
      </Columns>
    </FrameMain>
  </Frame>
);

const CommentPopover = () => (
  <Popover>
    <PopHeader>
      <PopIcon $ml={2}>
        <svg width="9" height="15" viewBox="0 0 9 15" fill="none" stroke="#222" strokeWidth="1.6">
          <path d="M7.500 1.500 1.500 7.500l6 6" />
        </svg>
      </PopIcon>
      <PopIcon $ml={41}>
        <svg width="9" height="15" viewBox="0 0 9 15" fill="none" stroke="#222" strokeWidth="1.6">
          <path d="m1.500 1.500 6 6-6 6" />
        </svg>
      </PopIcon>
      <Spacer />
      <svg width="17" height="5" viewBox="0 0 17 5" fill="#111">
        <circle cx="2.3" cy="2.5" r="1.9" />
        <circle cx="8.5" cy="2.5" r="1.9" />
        <circle cx="14.7" cy="2.5" r="1.9" />
      </svg>
      <PopIcon $ml={28.5}>
        <svg width="25" height="25" viewBox="0 0 25 25" fill="none" stroke="#111" strokeWidth="1.5">
          <path d="M17.500 23.700H4.300a3 3 0 0 1-3-3V4.300a3 3 0 0 1 3-3h16.400a3 3 0 0 1 3 3V16c0 3-4 4-5.500 1.500L9 8.500" />
          <path d="M8.700 16V8.300h8.500" />
        </svg>
      </PopIcon>
      <PopIcon $ml={28} $mr={-4}>
        <svg width="20" height="20" viewBox="0 0 20 20" fill="none" stroke="#111" strokeWidth="1.5">
          <path d="m2 2 16 16M18 2 2 18" />
        </svg>
      </PopIcon>
    </PopHeader>
    <Author>
      <Avatar $size={38} $color="#ffcd29" $ink="#3a3010" $font={19}>
        S
      </Avatar>
      <b>Shubham Kumar</b>
      <time>4 days ago</time>
    </Author>
    <Message>
      hovering on authors name should
      <br />
      change its colour to blue &amp; underline
      <br />
      it.
      <br />
      And if clicked, lead to the authors
      <br />
      public profile.
    </Message>
    <ReplyRow>
      <Avatar $size={38} $color="#f24822" $font={19}>
        P
      </Avatar>
      <ReplyBox>
        <Caret>Reply</Caret>
        <svg width="38" height="38" viewBox="0 0 38 38" fill="none">
          <circle cx="19" cy="19" r="19" fill="#d9d9d9" />
          <path d="M19 28.500V10M11 17.500 19 9.500l8 8" stroke="#fff" strokeWidth="1.5" />
        </svg>
      </ReplyBox>
    </ReplyRow>
  </Popover>
);

const Inspector = () => (
  <RightPanel>
    <PanelTabs>
      <span>Comment</span>
      <b>Inspect</b>
      <span>Export</span>
    </PanelTabs>
    <Section $bottom={5}>
      <SectionRow $bold>Code</SectionRow>
      <SectionRow>
        <Language>CSS</Language>
        <Chevron w={11} c="#b3b3b3" s={1.4} />
        <Spacer />
        <ViewToggle>
          <svg width="22" height="16" viewBox="0 0 22 16" fill="none" stroke="#111" strokeWidth="1.6">
            <path d="M7.500 1 1.200 8l6.300 7M14.500 1l6.300 7-6.300 7" />
          </svg>
        </ViewToggle>
        <ListGlyph>
          <svg width="19" height="16" viewBox="0 0 19 16" stroke="#111" strokeWidth="1.6">
            <path d="M0 1.500h15.500M0 8h19M0 14.500h12.500" />
          </svg>
        </ListGlyph>
      </SectionRow>
      <SectionRow $h={72}>
        <Code>
          {"background: "}
          <em>#F5F5F5</em>;
        </Code>
        <Swatch />
      </SectionRow>
    </Section>
    <Section $bottom={12}>
      <SectionRow $bold>
        Flows
        <Spacer />
        <svg width="22" height="12" viewBox="0 0 22 12" fill="none" stroke="#111" strokeWidth="1.5">
          <path d="M1 1.500C5.500 8.500 16.500 8.500 21 1.500M4.500 5l-3 2.500M8.500 6.500l-1.300 3.800M13.500 6.500l1.300 3.800M17.500 5l3 2.500" />
        </svg>
      </SectionRow>
      <SectionRow>Flow 5</SectionRow>
      <SectionRow>Flow 6</SectionRow>
    </Section>
    <HelpButton>
      <svg width="15" height="24" viewBox="0 0 15 24" fill="none" stroke="#fff" strokeWidth="1.5">
        <path d="M1.500 7.500C1.500 3.500 4 1.200 7.500 1.200s6 2.300 6 5.600c0 4.500-6 4.500-6 9.500v1.200" />
        <path d="M7.500 21v2" />
      </svg>
    </HelpButton>
  </RightPanel>
);

const WindowsTaskbar = () => (
  <Taskbar>
    <Weather>
      <svg width="30" height="28" viewBox="0 0 30 28">
        <defs>
          <linearGradient id="sun" x1="0" y1="0" x2="0" y2="1">
            <stop offset="0" stopColor="#fcc60a" />
            <stop offset="1" stopColor="#ea6210" />
          </linearGradient>
        </defs>
        <circle cx="15" cy="14" r="13" fill="url(#sun)" />
        <path d="M12 6.500h17M6 11.500h20M1.500 16.500h15M19.500 16.500h4M1.500 21.500h24" stroke="#f6d9a6" strokeWidth="2" strokeLinecap="round" />
      </svg>
      <div>
        77°F<p>Haze</p>
      </div>
    </Weather>
    <Start>
      <svg width="29" height="29" viewBox="0 0 29 29">
        <defs>
          <linearGradient id="win" x1="0" y1="0" x2="1" y2="1">
            <stop offset="0" stopColor="#4cc9fb" />
            <stop offset="1" stopColor="#0a78d0" />
          </linearGradient>
        </defs>
        <path d="M0 0h14v14H0zM15 0h14v14H15zM0 15h14v14H0zM15 15h14v14H15z" fill="url(#win)" />
      </svg>
    </Start>
    <SearchPill>
      <SearchGlyph size={17} s={1.7} />
      Search
    </SearchPill>
    <TaskApps>
      <TaskApp>
        <svg width="30" height="30" viewBox="0 0 30 30">
          <rect x="0" y="8" width="22" height="20" rx="1.5" fill="#2d2d2d" />
          <rect x="8" y="1" width="22" height="20" rx="1.5" fill="#fff" />
          <rect x="8" y="8" width="14" height="13" fill="#c4c4c4" />
        </svg>
      </TaskApp>
      <TaskApp>
        <svg width="30" height="30" viewBox="0 0 30 30">
          <path d="M15 1a14 14 0 1 1-5 27l-8 1 1.500-6A14 14 0 0 1 15 1z" fill="#6d62c0" />
          <rect x="7" y="9.5" width="11" height="11" rx="2" fill="#fff" />
          <path d="m19.500 13 4-2.500v9l-4-2.500z" fill="#fff" />
        </svg>
      </TaskApp>
      <TaskApp $open>
        <svg width="30" height="30" viewBox="0 0 30 30">
          <path d="M0 4a2 2 0 0 1 2-2h9l3 4h14v6H0z" fill="#e5a50f" />
          <rect y="6" width="30" height="22" rx="2" fill="#ffcb45" />
          <path d="M5 28v-5a2 2 0 0 1 2-2h16a2 2 0 0 1 2 2v5z" fill="#1073c8" />
          <path d="M10 24.500h10" stroke="#0b4f94" strokeWidth="1.5" />
        </svg>
      </TaskApp>
      <TaskApp $open>
        <svg width="30" height="30" viewBox="0 0 30 30">
          <defs>
            <linearGradient id="edge" x1="0" y1="0" x2="1" y2=".5">
              <stop offset="0" stopColor="#1f8fdd" />
              <stop offset=".6" stopColor="#35c1c9" />
              <stop offset="1" stopColor="#62d84f" />
            </linearGradient>
          </defs>
          <circle cx="15" cy="15" r="14.5" fill="#1268c0" />
          <path d="M.5 14C1 6 7 .5 15 .5c9 0 14.500 6 14.500 12 0 4-3 7-7 7-3 0-5-1-5-2.500 0-1 1-1.500 1-3.500 0-2.500-2.500-4.500-6-4.500C7 9 2 11 .5 14z" fill="url(#edge)" />
          <path d="M12 14c-3 6 2 12 9 12 2.500 0 4.500-.8 6.500-2-2.500 3.500-6.500 5.500-11 5.500C9 29 5.500 20 12 14z" fill="#0c4a8e" />
          <path d="M17.500 17c0 1.500 2 2.500 5 2.500 3.500 0 6-1.500 7-4 0 4-1 6-2.500 7.500-4 2-10 .5-10.500-4z" fill="#e8f298" />
        </svg>
      </TaskApp>
      <TaskApp>
        <svg width="30" height="30" viewBox="0 0 30 30">
          <path d="M8.500 6V2h13v4" stroke="#28a8ea" strokeWidth="2" fill="none" />
          <path d="M1 6h28v20a3 3 0 0 1-3 3H4a3 3 0 0 1-3-3z" fill="#1d4a80" />
          <path d="M9.500 12h5v5h-5z" fill="#f25022" />
          <path d="M15.800 12h5v5h-5z" fill="#7fba00" />
          <path d="M9.500 18.300h5v5h-5z" fill="#00a4ef" />
          <path d="M15.800 18.300h5v5h-5z" fill="#ffb900" />
        </svg>
      </TaskApp>
      <TaskApp>
        <svg width="30" height="30" viewBox="0 0 30 30">
          <rect width="30" height="30" fill="#22aadb" />
          <path d="m10 5-3 19 4 .5z" fill="#14386b" />
          <path d="M10 5h4.500v15.500H23v4H10z" fill="#fff" />
        </svg>
      </TaskApp>
      <TaskApp>
        <svg width="30" height="30" viewBox="0 0 30 30">
          <path d="m2 1 13 6.500L28 1v21.500L15 29.500 2 22.500zM7.500 8.500v11L15 23.500l7.500-4v-11L15 13z" fill="#c12c30" fillRule="evenodd" />
        </svg>
      </TaskApp>
      <TaskApp>
        <svg width="30" height="30" viewBox="0 0 30 30">
          <rect width="30" height="30" fill="#0078d7" />
          <path d="M12.500 21.500a6.500 6.500 0 1 1 5 0" stroke="#00c8ff" strokeWidth="2" fill="none" />
        </svg>
      </TaskApp>
      <TaskApp $open>
        <svg width="30" height="30" viewBox="0 0 30 30">
          <path d="m22 1 8 3.500v21L22 29z" fill="#2aa5f2" />
          <path d="M22 1v7.500L4 22.500 1 20.500V19zM22 29v-7.500L4 7.500 1 9.500V11z" fill="#0f74bd" />
        </svg>
      </TaskApp>
      <TaskApp $open $active>
        <svg width="38" height="34" viewBox="-2 -4 38 34">
          <circle cx="17" cy="15" r="14.5" fill="#fbc116" />
          <path d="M17 15 4.500 7.800A14.500 14.500 0 0 0 16 29.500l5-9z" fill="#279847" />
          <path d="M4.500 7.800A14.500 14.500 0 0 1 29.500 7.800H17l-6 9z" fill="#e33b2e" />
          <circle cx="17" cy="15" r="7" fill="#fff" />
          <circle cx="17" cy="15" r="5.5" fill="#2f77e6" />
          <circle cx="26.500" cy="5.500" r="9.3" fill="#0b87cc" />
          <text x="26.500" y="9.500" fill="#d8f0ff" fontSize="11" fontFamily="Roboto" textAnchor="middle">
            S
          </text>
        </svg>
      </TaskApp>
      <TaskApp $open>
        <svg width="30" height="30" viewBox="0 0 30 30">
          <rect x="4" y="2" width="22" height="27" rx="2" fill="#5cc6e0" />
          <path d="M4 27h22v2.500H4z" fill="#a5471b" />
          <path d="M4 25.500h22V27H4z" fill="#fff" />
          <path d="M7 0v4M11 0v4M15 0v4M19 0v4M23 0v4" stroke="#0b5b78" strokeWidth="1.7" />
          <path d="M8.500 9.500h13M8.500 14.500h13M8.500 19.500h13" stroke="#0d6f96" strokeWidth="1.800" />
        </svg>
      </TaskApp>
    </TaskApps>
    <Tray>
      <TrayIcon $w={30}>
        <svg width="16" height="9" viewBox="0 0 16 9" fill="none" stroke="#1b1b1b" strokeWidth="1.4">
          <path d="M.5 8.500 8 1l7.500 7.500" />
        </svg>
      </TrayIcon>
      <TrayIcon $w={30}>
        <svg width="20" height="14" viewBox="0 0 20 14">
          <path d="M5 13a4.300 4.300 0 0 1-.5-8.400A5.700 5.700 0 0 1 15 4.800 4.200 4.200 0 0 1 15.200 13z" fill="#9b9b9b" stroke="#1b1b1b" strokeWidth="1.2" />
          <path d="M3 12.200 11 8l7 2.500c-.5 1.300-1.500 1.900-2.800 1.900H5z" fill="#eee" />
        </svg>
      </TrayIcon>
      <TrayText $w={56} $ls={0.5}>
        ENG
        <br />
        IN
      </TrayText>
      <TrayIcon $w={37}>
        <svg width="20" height="16" viewBox="0 0 20 16" fill="none" stroke="#1b1b1b" strokeWidth="1.5">
          <path d="M.8 6a13 13 0 0 1 18.400 0M3.800 9a8.800 8.800 0 0 1 12.400 0M6.800 12a4.600 4.600 0 0 1 6.400 0" />
          <circle cx="10" cy="13.8" r="1.3" fill="#1b1b1b" stroke="none" />
        </svg>
      </TrayIcon>
      <TrayIcon $w={23}>
        <svg width="21" height="17" viewBox="0 0 21 17" fill="none" stroke="#1b1b1b" strokeWidth="1.3">
          <path d="M1 6h3l4.500-4v13L4 11H1zM11.500 5.500c1.300 1.800 1.300 4.200 0 6M14.200 3.500c2.300 3 2.300 7 0 10M17 1.500c3.300 4.200 3.300 9.800 0 14" />
        </svg>
      </TrayIcon>
      <TrayIcon $w={36}>
        <svg width="20" height="16" viewBox="0 0 20 16">
          <path d="M6 3.500h8.500a2.500 2.500 0 0 1 2.500 2.500v6a2.500 2.500 0 0 1-2.500 2.500h-11A2.500 2.500 0 0 1 1 12V9.500" fill="none" stroke="#1b1b1b" strokeWidth="1.4" />
          <path d="M6 6h8.500v6h-11V9.500zM17.500 7H19.500v4h-2zM4 0 0 5.500h2.300L1.500 9 6 3.500H3.700z" fill="#1b1b1b" />
        </svg>
      </TrayIcon>
      <TrayText $w={91} $align="right" $up={2}>
        17:21
        <br />
        06-02-2023
      </TrayText>
      <Badge>2</Badge>
    </Tray>
  </Taskbar>
);

export default function App() {
  return (
    <Screen>
      <Global />
      <Browser />
      <EditorToolbar />
      <Workspace>
        <LeftPanel>
          <SearchRow>
            <SearchGlyph size={18} />
            <span>All</span>
            <Chevron w={11} c="#a8a8a8" s={1.4} />
          </SearchRow>
          <PageRow>
            <FrameHash />
            Courses
          </PageRow>
          {layers.map(([kind, name, indent]) => (
            <Layer key={name} $indent={indent} $purple={kind === "diamond"}>
              <LayerIcon kind={kind} />
              {name}
            </Layer>
          ))}
        </LeftPanel>
        <Canvas>
          <UpperFrame>
            <div />
          </UpperFrame>
          <FrameLabel>Learn &amp; Earn - Course</FrameLabel>
          <Mock />
          <Pin>
            <Avatar $size={38} $color="#ffcd29" $ink="#3a3010" $font={20}>
              S
            </Avatar>
          </Pin>
          <CommentPopover />
          <HScroll />
          <VScroll />
        </Canvas>
        <Inspector />
      </Workspace>
      <WindowsTaskbar />
    </Screen>
  );
}
